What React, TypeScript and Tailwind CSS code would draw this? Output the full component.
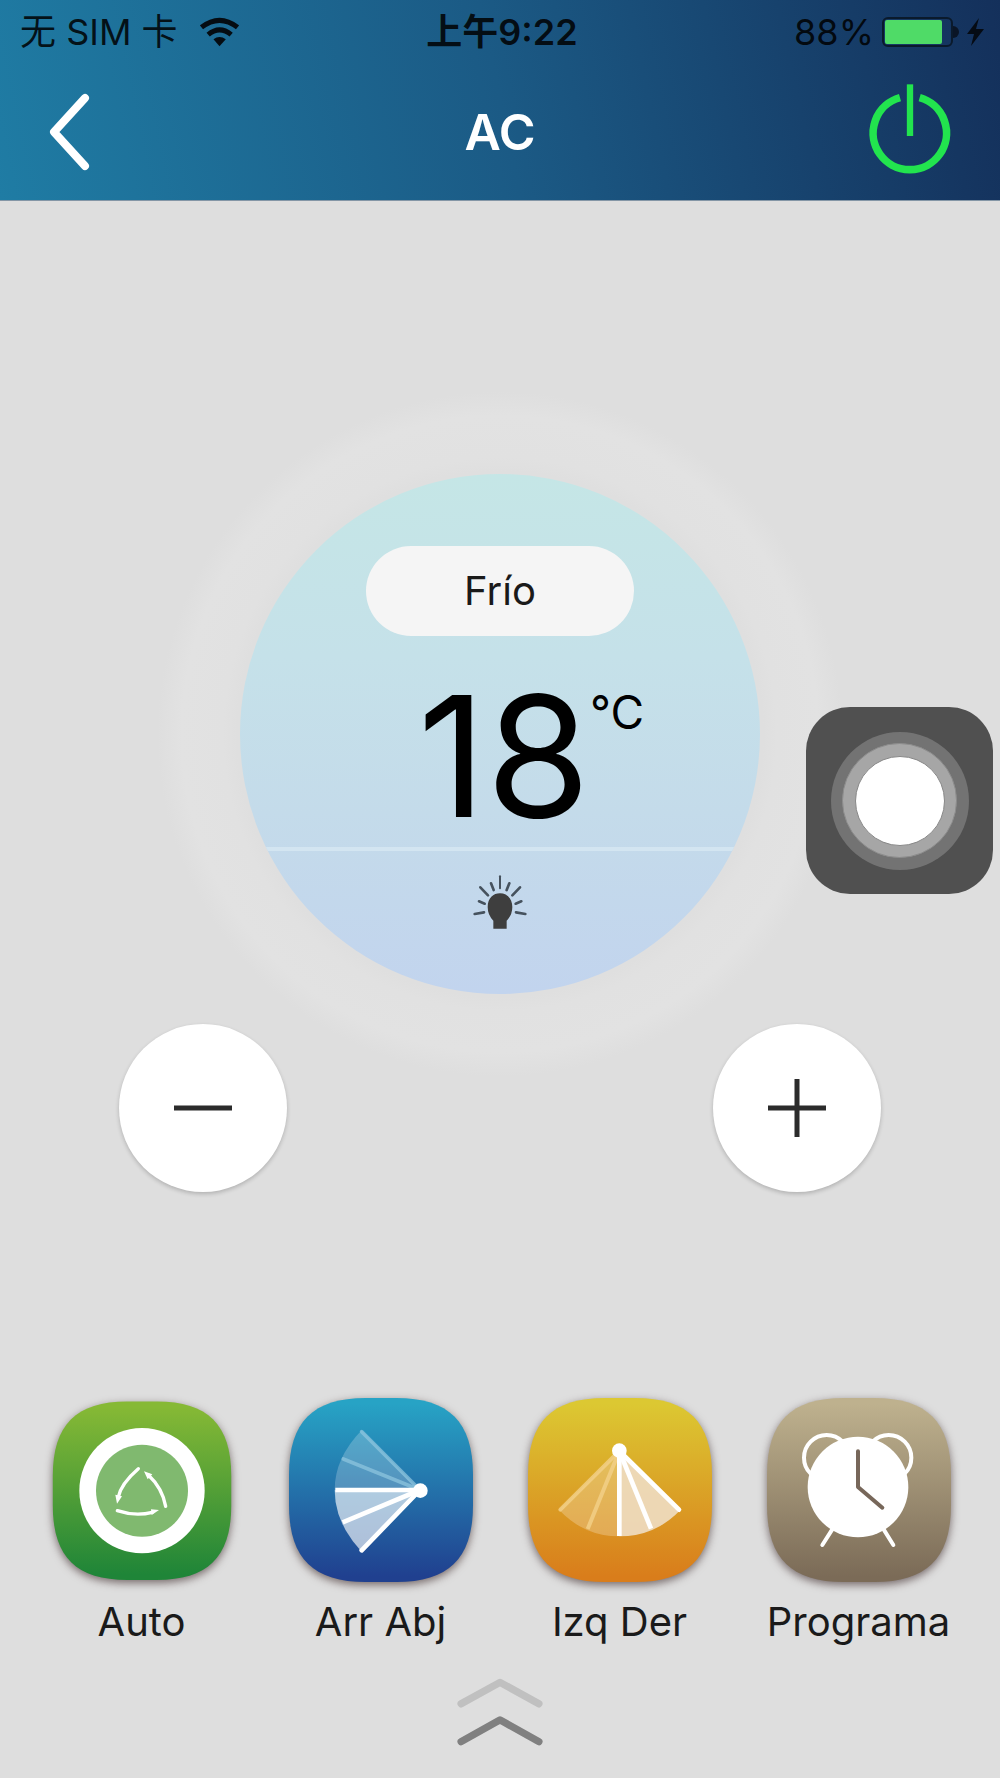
import { useState, type ReactNode } from 'react';

const TILE = 'M285 55H377C535 55 607 127 607 285V377C607 535 535 607 377 607H285C127 607 55 535 55 377V285C55 127 127 55 285 55Z';

function Tile({ id, from, to, children }: { id: string; from: string; to: string; children: ReactNode }) {
  return (
    <svg
      viewBox="55 55 552 552"
      className="size-[184px] overflow-visible drop-shadow-[0_3px_4px_rgba(50,30,30,0.6)]"
      aria-hidden="true"
    >
      <defs>
        <linearGradient id={id} x1="0" y1="0" x2="0" y2="1">
          <stop offset="0.03" stopColor={from} />
          <stop offset="0.97" stopColor={to} />
        </linearGradient>
      </defs>
      {children}
    </svg>
  );
}

function AutoIcon() {
  return (
    <Tile id="auto-bg" from="#86b935" to="#1f8538">
      <g transform="translate(-4 0)">
        <path d={TILE} fill="url(#auto-bg)" transform="translate(14 12) scale(0.97)" />
        <circle cx="335" cy="333" r="188" fill="#fff" />
        <circle cx="335" cy="333" r="138" fill="#80b96f" />
        <g fill="none" stroke="#fff" strokeWidth="10" strokeLinecap="round">
          <path d="M324 267Q272 312 264 352" />
          <path d="M354 286Q396 325 406 380" />
          <path d="M261 393Q315 411 366 398" />
        </g>
        <g fill="#fff">
          <path d="M255 345L275 350L260 372Z" />
          <path d="M341 275L366 284L352 299Z" />
          <path d="M386 391L362 389L364 406Z" />
        </g>
      </g>
    </Tile>
  );
}

function UpDownIcon() {
  return (
    <Tile id="updown-bg" from="#27a3c5" to="#20408f">
      <path d={TILE} fill="url(#updown-bg)" />
      <path d="M448 331L273 152Q192 235 192 331Z" fill="#fff" fillOpacity="0.22" />
      <path d="M448 331L192 331Q192 430 273 516Z" fill="#fff" fillOpacity="0.64" />
      <g stroke="#8cc4dd" strokeOpacity="0.75" strokeWidth="11" strokeLinecap="round">
        <path d="M448 331L273 156" />
        <path d="M448 331L218 238" />
      </g>
      <g stroke="#fff" strokeWidth="14">
        <path d="M448 331H194" />
        <path d="M448 331L216 428" />
        <path d="M448 331L273 512" strokeLinecap="round" />
      </g>
      <circle cx="449" cy="333" r="22" fill="#fff" />
    </Tile>
  );
}

function LeftRightIcon() {
  return (
    <Tile id="leftright-bg" from="#dcc832" to="#d97d1b">
      <path d={TILE} fill="url(#leftright-bg)" />
      <path d="M329 214L148 390Q223 470 329 470Z" fill="#f2d8aa" fillOpacity="0.38" />
      <path d="M329 214V470Q437 470 513 390Z" fill="#eedcc0" fillOpacity="0.93" />
      <g stroke="#f2d18a" strokeOpacity="0.8" strokeWidth="12">
        <path d="M329 214L152 390" strokeLinecap="round" />
        <path d="M329 214L234 448" />
      </g>
      <g stroke="#fff" strokeWidth="14">
        <path d="M329 214V469" />
        <path d="M329 214L424 447" />
        <path d="M329 214L508 390" strokeLinecap="round" />
      </g>
      <circle cx="329" cy="213" r="22" fill="#fff" />
    </Tile>
  );
}

function ClockIcon() {
  return (
    <Tile id="clock-bg" from="#beb18e" to="#7b6b57">
      <path d={TILE} fill="url(#clock-bg)" />
      <g fill="none" stroke="#fff" strokeWidth="12" strokeLinecap="round">
        <circle cx="234" cy="234" r="68" />
        <circle cx="420" cy="234" r="68" />
        <path d="M258 438L221 496" />
        <path d="M398 438L434 496" />
      </g>
      <circle cx="328" cy="322" r="151" fill="#fff" />
      <path d="M328 215V322L401 384" fill="none" stroke="#77675a" strokeWidth="12" strokeLinecap="round" strokeLinejoin="round" />
    </Tile>
  );
}

const functions = [
  { label: 'Auto', icon: <AutoIcon /> },
  { label: 'Arr Abj', icon: <UpDownIcon /> },
  { label: 'Izq Der', icon: <LeftRightIcon /> },
  { label: 'Programa', icon: <ClockIcon /> },
];

function StatusBar() {
  return (
    <div className="grid h-16 grid-cols-[1fr_auto_1fr] items-center pr-4 pl-5 text-4xl leading-none text-black/85">
      <div className="flex items-center gap-[22px]">
        <span>无 SIM 卡</span>
        <svg viewBox="600 48 116 90" className="h-[30px] w-[39px]" aria-hidden="true">
          <g fill="none" stroke="#050c12" strokeWidth="15">
            <path d="M604 79Q658 37 712 79" />
            <path d="M624 101Q658 72 693 101" />
          </g>
          <path d="M640 115Q658 101 677 115L658 136Z" fill="#050c12" />
        </svg>
      </div>
      <span className="font-semibold">上午9:22</span>
      <div className="flex items-center justify-end gap-2">
        <span>88%</span>
        <div className="flex items-center">
          <div className="h-[30px] w-[71px] rounded-md border-2 border-[#0a1a2c] p-px">
            <div className="h-full w-[88%] rounded-xs bg-[#4fdb67]" />
          </div>
          <div className="h-3 w-[6px] rounded-r-full bg-[#0a1526]" />
          <svg viewBox="0 0 17 28" className="ml-2 h-7 w-[17px]" aria-hidden="true">
            <path d="M12 0L0 16H7L4 28L17 11H9Z" fill="#050b14" />
          </svg>
        </div>
      </div>
    </div>
  );
}

function Bulb() {
  return (
    <svg viewBox="399 1068 162 162" className="size-[54px]" aria-hidden="true">
      <path d="M460 1229V1205Q443 1188 443 1164C443 1137 460 1123 480 1123S517 1137 517 1164Q517 1188 500 1205V1229Z" fill="#3e3e3e" />
      <g stroke="#46525e" strokeWidth="8" strokeLinecap="round">
        <path d="M480 1072V1108" strokeWidth="6" />
        <path d="M453 1093L461 1113" />
        <path d="M508 1093L500 1113" />
        <path d="M421 1105L444 1129" />
        <path d="M540 1105L517 1129" />
        <path d="M417 1147L434 1154" />
        <path d="M544 1147L527 1154" />
        <path d="M404 1185L432 1180" />
        <path d="M556 1185L528 1180" />
      </g>
    </svg>
  );
}

export default function App() {
  const [temp, setTemp] = useState(18);
  const round =
    'flex size-[168px] items-center justify-center rounded-full bg-white shadow-[0_2px_4px_rgba(0,0,0,0.2)]';
  return (
    <div className="relative flex min-h-screen flex-col bg-[#dedede] font-[Inter,'Noto_Sans_CJK_SC',sans-serif] text-[#1a1a1a]">
      <header className="border-b border-[#8496a6] bg-[linear-gradient(78deg,#1f7ca4_0%,#1b5a85_50%,#14305b_100%)]">
        <StatusBar />
        <nav className="grid h-[136px] grid-cols-[1fr_auto_1fr] items-center px-12">
          <button type="button" aria-label="Atrás" className="justify-self-start">
            <svg viewBox="0 0 44 78" className="h-[78px] w-[44px]" fill="none" stroke="#fff" strokeWidth="8" strokeLinecap="round" strokeLinejoin="round">
              <path d="M37 5L6 39L37 73" />
            </svg>
          </button>
          <h1 className="text-[50px] leading-none font-semibold text-white">AC</h1>
          <button type="button" aria-label="Encendido" className="justify-self-end">
            <svg viewBox="1104 252 250 288" className="h-24 w-[84px]" fill="none" stroke="#22e44e">
              <path d="M1199 293A110 110 0 1 0 1258 293" strokeWidth="23" />
              <path d="M1229 253V408" strokeWidth="19" />
            </svg>
          </button>
        </nav>
      </header>

      <main className="flex flex-1 flex-col">
        <section className="mt-[187px] flex justify-center">
          <div className="flex size-[692px] items-center justify-center rounded-full bg-[radial-gradient(closest-side,#dfdfdf_76%,#e1e1e1_80%,#e2e2e2_92%,#dedede_99%)]">
            <div className="flex size-[520px] flex-col items-center overflow-hidden rounded-full bg-[linear-gradient(180deg,#c5e6e6_0%,#c5e1e9_35%,#c4dbea_65%,#c2d4ee_100%)]">
              <button type="button" className="mt-[72px] h-[90px] w-[268px] rounded-full bg-[#f5f5f5] text-[40px] leading-none">
                Frío
              </button>
              <div className="mt-9 ml-[62px] flex items-start text-black">
                <output className="text-[168px] leading-[168px]">{temp}</output>
                <span className="mt-3 text-[46px] leading-[56px]">°C</span>
              </div>
              <div className="mt-[7px] h-1 w-full shrink-0 bg-[#d3e5f1]" />
              <div className="mt-6">
                <Bulb />
              </div>
            </div>
          </div>
        </section>

        <section className="-mt-14 flex justify-between px-[119px]">
          <button type="button" aria-label="Bajar temperatura" className={round} onClick={() => setTemp(temp - 1)}>
            <svg viewBox="0 0 58 58" className="size-[58px]" stroke="#2b2b2b" strokeWidth="5">
              <path d="M0 29H58" />
            </svg>
          </button>
          <button type="button" aria-label="Subir temperatura" className={round} onClick={() => setTemp(temp + 1)}>
            <svg viewBox="0 0 58 58" className="size-[58px]" stroke="#2b2b2b" strokeWidth="5">
              <path d="M0 29H58M29 0V58" />
            </svg>
          </button>
        </section>

        <section className="mt-[206px] grid grid-cols-4 px-[22px]">
          {functions.map((f) => (
            <button key={f.label} type="button" className="flex flex-col items-center gap-4">
              {f.icon}
              <span className="text-[40px] leading-[48px] whitespace-nowrap">{f.label}</span>
            </button>
          ))}
        </section>

        <button type="button" aria-label="Más funciones" className="mt-8 mb-7 self-center">
          <svg viewBox="82 55 256 203" className="h-[68px] w-[86px]" fill="none" strokeWidth="22" strokeLinecap="round" strokeLinejoin="round">
            <path d="M94 132L210 68L326 132" stroke="#c0c0c0" />
            <path d="M94 245L210 180L326 245" stroke="#808080" />
          </svg>
        </button>
      </main>

      <button
        type="button"
        aria-label="AssistiveTouch"
        className="absolute top-[707px] right-[7px] flex size-[187px] items-center justify-center rounded-[44px] bg-[#505050]"
      >
        <span className="flex size-[138px] items-center justify-center rounded-full bg-[#737373]">
          <span className="flex size-[115px] items-center justify-center rounded-full border border-[#8c8c8c] bg-[#a6a6a6]">
            <span className="size-[90px] rounded-full border border-[#888] bg-white" />
          </span>
        </span>
      </button>
    </div>
  );
}
